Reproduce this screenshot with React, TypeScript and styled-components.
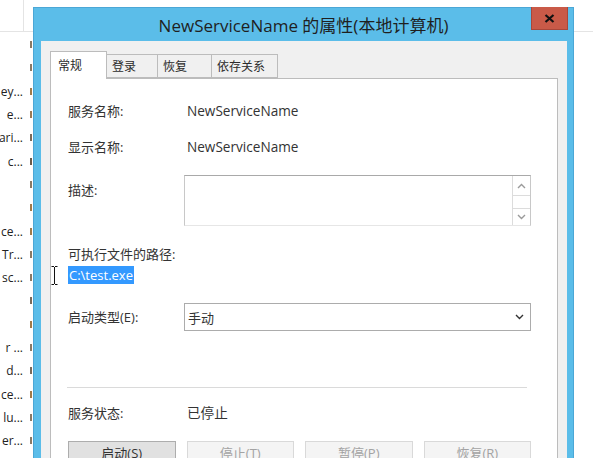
import React from "react";
import styled, { createGlobalStyle } from "styled-components";

const Global = createGlobalStyle`
  html, body { margin: 0; padding: 0; width: 593px; height: 458px; overflow: hidden; background: #fff; }
  body { font-family: "Open Sans", "Noto Sans CJK SC", sans-serif; color: #333; }
  * { box-sizing: border-box; }
`;

const Desktop = styled.div`
  position: relative;
  width: 593px;
  height: 458px;
  overflow: hidden;
  background: #fff;
`;

const BgHeader = styled.div`
  display: flex;
  height: 32px;
  border-bottom: 1px solid #e4e4e4;
`;

const BgHeaderCell = styled.div<{ $w: number }>`
  width: ${(p) => p.$w}px;
  border-right: 1px solid #e4e4e4;
`;

const BgList = styled.div`
  display: flex;
  flex-direction: column;
  padding-top: 1px;
`;

const BgRow = styled.div`
  display: flex;
  height: 23.3px;
  align-items: center;
`;

const BgName = styled.div`
  width: 23px;
  margin-right: 1px;
  display: flex;
  justify-content: flex-end;
  font-size: 12px;
  white-space: nowrap;
  overflow: hidden;
  color: #222;
  & > span { flex-shrink: 0; }
`;

const BgIcon = styled.div<{ $c: string }>`
  width: 9px;
  display: flex;
  justify-content: flex-end;
  padding-right: 1px;
  &::after {
    content: "";
    width: 2px;
    height: 7px;
    background: ${(p) => p.$c};
  }
`;

const Window = styled.div`
  position: absolute;
  left: 33px;
  top: 7px;
  width: 541px;
  height: 470px;
  background: #5bbde9;
  border: 1px solid #4ba7d6;
  display: flex;
  flex-direction: column;
`;

const TitleBar = styled.div`
  position: relative;
  height: 33px;
  display: flex;
  align-items: center;
  justify-content: center;
  font-size: 17px;
  color: #1f1f1f;
`;

const CloseButton = styled.div`
  position: absolute;
  top: -1px;
  right: 5px;
  width: 37px;
  height: 23px;
  background: #c95a48;
  border: 1px solid #a9473a;
  border-top: none;
  display: flex;
  align-items: center;
  justify-content: center;
`;

const Client = styled.div`
  flex: 1;
  margin: 0 6px 0 7px;
  background: #f0f0f0;
  padding: 10px 9px 0 9px;
  display: flex;
  flex-direction: column;
`;

const TabStrip = styled.div`
  display: flex;
  align-items: flex-end;
  height: 27px;
  position: relative;
  z-index: 1;
`;

const Tab = styled.div<{ $w: number; $active?: boolean }>`
  width: ${(p) => p.$w}px;
  height: ${(p) => (p.$active ? 28 : 24)}px;
  margin-bottom: ${(p) => (p.$active ? -1 : 0)}px;
  margin-left: -1px;
  &:first-child { margin-left: 0; }
  background: ${(p) => (p.$active ? "#fff" : "#f0f0f0")};
  border: 1px solid #bcbcbc;
  border-bottom: ${(p) => (p.$active ? "none" : "1px solid #bcbcbc")};
  font-size: 12px;
  color: #2b2b2b;
  display: flex;
  align-items: ${(p) => (p.$active ? "flex-start" : "center")};
  padding-top: ${(p) => (p.$active ? 4 : 0)}px;
  padding-left: ${(p) => (p.$active ? 7 : 5)}px;
  position: relative;
  z-index: ${(p) => (p.$active ? 2 : 1)};
`;

const Panel = styled.div`
  flex: 1;
  background: #fff;
  border: 1px solid #bcbcbc;
  padding: 22px 0 0 17px;
  display: flex;
  flex-direction: column;
`;

const Row = styled.div<{ $mt: number; $align?: string }>`
  display: flex;
  align-items: ${(p) => p.$align || "center"};
  margin-top: ${(p) => p.$mt}px;
  min-height: 20px;
`;

const Label = styled.div<{ $pt?: number }>`
  width: 116px;
  font-size: 13px;
  line-height: 20px;
  padding-top: ${(p) => p.$pt || 0}px;
  color: #333;
  white-space: nowrap;
`;

const Value = styled.div`
  font-size: 13.6px;
  line-height: 20px;
  padding-left: 3px;
  color: #333;
  white-space: nowrap;
`;

const PlainLabel = styled.div<{ $mt: number }>`
  font-size: 13px;
  line-height: 20px;
  margin-top: ${(p) => p.$mt}px;
  color: #333;
`;

const Selected = styled.div`
  align-self: flex-start;
  margin-top: 2px;
  height: 18px;
  line-height: 18px;
  background: #3399ff;
  color: #fff;
  font-size: 13px;
  padding: 0 1px 0 1px;
`;

const TextBox = styled.div`
  width: 347px;
  height: 51px;
  border: 1px solid #c8c8c8;
  border-top-color: #a9a9a9;
  border-bottom-color: #e6e6e6;
  display: flex;
  justify-content: flex-end;
`;

const ScrollBar = styled.div`
  width: 18px;
  display: flex;
  flex-direction: column;
  border-left: 1px solid #dcdcdc;
`;

const ScrollBtn = styled.div<{ $h: number; $line?: boolean }>`
  height: ${(p) => p.$h}px;
  display: flex;
  align-items: center;
  justify-content: center;
  border-bottom: ${(p) => (p.$line ? "1px solid #dcdcdc" : "none")};
`;

const Select = styled.div`
  width: 347px;
  height: 28px;
  border: 1px solid #acacac;
  background: #fff;
  display: flex;
  align-items: center;
  justify-content: space-between;
  padding: 0 6px 0 3px;
  font-size: 13px;
  color: #333;
`;

const Separator = styled.div`
  margin: 56px 30px 0 -1px;
  height: 1px;
  background: #dadada;
`;

const ButtonRow = styled.div`
  display: grid;
  grid-template-columns: repeat(4, 1fr);
  gap: 11px;
  width: 463px;
  margin-top: 18px;
`;

const Button = styled.div<{ $disabled?: boolean }>`
  height: 23px;
  display: flex;
  align-items: center;
  justify-content: center;
  font-size: 13px;
  background: ${(p) => (p.$disabled ? "#f4f4f4" : "#e1e1e1")};
  border: 1px solid ${(p) => (p.$disabled ? "#d9d9d9" : "#adadad")};
  color: ${(p) => (p.$disabled ? "#a3a3a3" : "#333")};
`;

const Cursor = styled.div`
  position: absolute;
  left: 51px;
  top: 266px;
  width: 7px;
  height: 19px;
`;

const bgRows: { t: string; c: string }[] = [
  { t: "", c: "#8a7a66" },
  { t: "", c: "#8a7a66" },
  { t: "ey...", c: "#a07a4a" },
  { t: "e...", c: "#9a7a55" },
  { t: "ari...", c: "#7a6a5a" },
  { t: "c...", c: "#6a5a4a" },
  { t: "", c: "#8a7a66" },
  { t: "", c: "#a07a4a" },
  { t: "ce...", c: "#a07a4a" },
  { t: "Tr...", c: "#8a7a66" },
  { t: "sc...", c: "#8a7a66" },
  { t: "", c: "#7a6a5a" },
  { t: "", c: "#a07a4a" },
  { t: "r ...", c: "#8a7a66" },
  { t: "d...", c: "#7a6a5a" },
  { t: "ce...", c: "#a07a4a" },
  { t: "lu...", c: "#8a7a66" },
  { t: "er...", c: "#8a7a66" },
];

const Chevron = ({ up, color }: { up?: boolean; color: string }) => (
  <svg width="9" height="6" viewBox="0 0 9 6">
    <path
      d={up ? "M1 5 L4.5 1.5 L8 5" : "M1 1 L4.5 4.5 L8 1"}
      fill="none"
      stroke={color}
      strokeWidth="1.4"
    />
  </svg>
);

export default function App() {
  return (
    <Desktop>
      <Global />
      <BgHeader>
        <BgHeaderCell $w={24} />
      </BgHeader>
      <BgList>
        {bgRows.map((r, i) => (
          <BgRow key={i}>
            <BgName>
              <span>{r.t}</span>
            </BgName>
            <BgIcon $c={r.c} />
          </BgRow>
        ))}
      </BgList>

      <Window>
        <TitleBar>
          NewServiceName 的属性(本地计算机)
          <CloseButton>
            <svg width="11" height="9" viewBox="0 0 11 9">
              <path d="M1.5 1 L9.5 8 M9.5 1 L1.5 8" stroke="#111" strokeWidth="2.2" />
            </svg>
          </CloseButton>
        </TitleBar>
        <Client>
          <TabStrip>
            <Tab $w={57} $active>常规</Tab>
            <Tab $w={52}>登录</Tab>
            <Tab $w={55}>恢复</Tab>
            <Tab $w={67}>依存关系</Tab>
          </TabStrip>
          <Panel>
            <Row $mt={0}>
              <Label>服务名称:</Label>
              <Value>NewServiceName</Value>
            </Row>
            <Row $mt={16}>
              <Label>显示名称:</Label>
              <Value>NewServiceName</Value>
            </Row>
            <Row $mt={18} $align="flex-start">
              <Label $pt={5}>描述:</Label>
              <TextBox>
                <ScrollBar>
                  <ScrollBtn $h={20} $line>
                    <Chevron up color="#9a9a9a" />
                  </ScrollBtn>
                  <ScrollBtn $h={13} $line />
                  <ScrollBtn $h={16}>
                    <Chevron color="#9a9a9a" />
                  </ScrollBtn>
                </ScrollBar>
              </TextBox>
            </Row>
            <PlainLabel $mt={18}>可执行文件的路径:</PlainLabel>
            <Selected>C:\test.exe</Selected>
            <Row $mt={19}>
              <Label>启动类型(E):</Label>
              <Select>
                <span>手动</span>
                <Chevron color="#333" />
              </Select>
            </Row>
            <Separator />
            <Row $mt={15}>
              <Label>服务状态:</Label>
              <Value>已停止</Value>
            </Row>
            <ButtonRow>
              <Button>启动(S)</Button>
              <Button $disabled>停止(T)</Button>
              <Button $disabled>暂停(P)</Button>
              <Button $disabled>恢复(R)</Button>
            </ButtonRow>
          </Panel>
        </Client>
      </Window>

      <Cursor>
        <svg width="7" height="19" viewBox="0 0 7 19">
          <path d="M0.5 0.5 H3 M4 0.5 H6.5 M3.5 1 V18 M0.5 18.5 H3 M4 18.5 H6.5" stroke="#111" strokeWidth="1" fill="none" />
        </svg>
      </Cursor>
    </Desktop>
  );
}
